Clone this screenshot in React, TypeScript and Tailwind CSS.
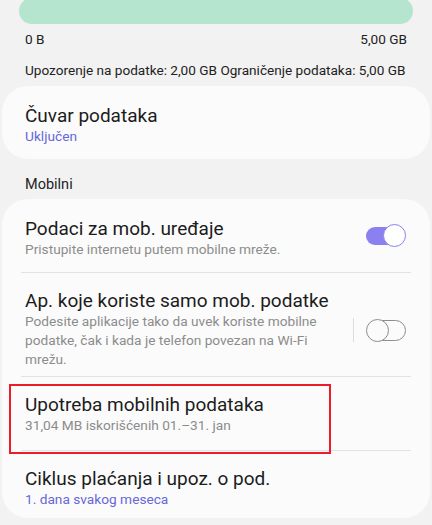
const font = { fontFamily: "Roboto, 'Noto Sans', sans-serif" };

function ToggleOn() {
  return (
    <div className="relative h-[24px] w-[40px] shrink-0">
      <div className="absolute left-0 top-[3px] h-[18px] w-[38px] rounded-full bg-[#8b80f0]" />
      <div className="absolute right-0 top-0 h-[23px] w-[23px] rounded-full border-[1.5px] border-[#8b80f0] bg-white" />
    </div>
  );
}

function ToggleOff() {
  return (
    <div className="relative h-[24px] w-[40px] shrink-0">
      <div className="absolute left-[1px] top-[2px] h-[21px] w-[39px] rounded-full border-[1.5px] border-[#8d8d8d]" />
      <div className="absolute left-0 top-[1px] h-[23px] w-[23px] rounded-full border-[1.5px] border-[#8d8d8d] bg-[#fbfbfb]" />
    </div>
  );
}

export default function App() {
  return (
    <div
      className="relative h-[525px] w-[432px] overflow-hidden bg-[#f2f2f2] text-[#1c1c1c]"
      style={font}
    >
      {/* Usage bar */}
      <div className="mx-[19px] -mt-[2px] h-[26px] rounded-full bg-[#b5e4cf]" />

      <div className="mx-[25px] mt-[6px] flex justify-between text-[13.6px] leading-[18px] text-[#222]">
        <span>0 B</span>
        <span>5,00 GB</span>
      </div>
      <div className="mx-[25px] mt-[13px] text-[13.6px] leading-[18px] text-[#222]">
        Upozorenje na podatke: 2,00 GB Ograničenje podataka: 5,00 GB
      </div>

      {/* Data saver card */}
      <div className="mx-[2px] mt-[7px] rounded-[26px] bg-[#fbfbfb] px-[23px] pb-[13px] pt-[19px]">
        <div className="text-[19px] leading-[22px]">Čuvar podataka</div>
        <div className="text-[13.7px] leading-[19px] text-[#6767d9]">Uključen</div>
      </div>

      <div className="mx-[25px] mb-[4px] mt-[16px] text-[14.5px] leading-[20px] text-[#222]">
        Mobilni
      </div>

      {/* Mobile card */}
      <div className="relative mx-[2px] rounded-[26px] bg-[#fbfbfb] px-[19px]">
        <div className="flex items-center border-b border-[#e3e3e3] pb-[13px] pl-[4px] pt-[19px]">
          <div className="flex-1">
            <div className="text-[19px] leading-[22px]">Podaci za mob. uređaje</div>
            <div className="text-[13.7px] leading-[19px] text-[#8c8c8c]">
              Pristupite internetu putem mobilne mreže.
            </div>
          </div>
          <div className="mr-[5px] mt-[-6px]">
            <ToggleOn />
          </div>
        </div>

        <div className="flex items-center border-b border-[#e3e3e3] pb-[7px] pl-[4px] pt-[17px]">
          <div className="flex-1 pr-[10px]">
            <div className="text-[19px] leading-[22px]">Ap. koje koriste samo mob. podatke</div>
            <div className="text-[13.7px] leading-[19px] text-[#8c8c8c]">
              Podesite aplikacije tako da uvek koriste mobilne podatke, čak i kada je telefon povezan na Wi-Fi mrežu.
            </div>
          </div>
          <div className="mr-[5px] flex items-center gap-[12px]">
            <div className="h-[24px] w-px bg-[#dcdcdc]" />
            <ToggleOff />
          </div>
        </div>

        <div className="border-b border-[#e3e3e3] pb-[15px] pl-[4px] pt-[17px]">
          <div className="text-[19px] leading-[22px]">Upotreba mobilnih podataka</div>
          <div className="text-[13.7px] leading-[19px] text-[#8c8c8c]">
            31,04 MB iskorišćenih 01.–31. jan
          </div>
        </div>

        <div className="pb-[9px] pl-[4px] pt-[17px]">
          <div className="text-[19px] leading-[22px]">Ciklus plaćanja i upoz. o pod.</div>
          <div className="text-[13.7px] leading-[19px] text-[#6767d9]">1. dana svakog meseca</div>
        </div>
      </div>

      {/* Highlight box */}
      <div className="absolute left-[9px] top-[384px] h-[70px] w-[322px] border-2 border-[#ec1c2a]" />
    </div>
  );
}
